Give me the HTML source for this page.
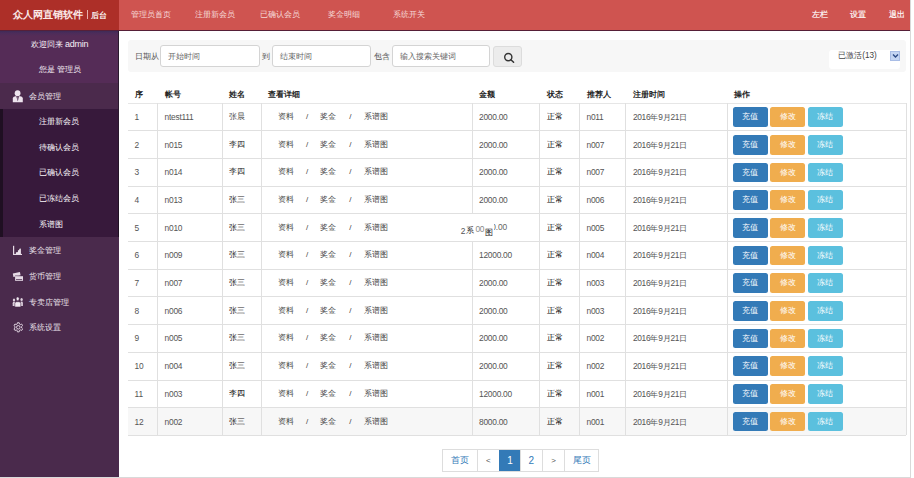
<!DOCTYPE html>
<html><head><meta charset="utf-8">
<style>
*{box-sizing:border-box;margin:0;padding:0}
html,body{width:914px;height:478px;overflow:hidden;background:#fff;font-family:"Liberation Sans",sans-serif;color:#333}
#frame{position:absolute;left:0;top:0;width:911px;height:477.5px;border-right:1px solid #d9d9d9;border-bottom:1.5px solid #d9d9d9;overflow:hidden}
#hdr{position:absolute;left:0;top:0;width:910px;height:31px;background:#cf5450;border-bottom:1px solid #561f38}
#logo{position:absolute;left:0;top:0;width:118.6px;height:30px;background:#ad2f28;color:#fbeae8}
#logo b{position:absolute;left:12.5px;top:8.7px;font-size:10.2px;font-weight:bold;letter-spacing:0;white-space:nowrap;line-height:12px}
#logo i{position:absolute;left:86.8px;top:10px;width:1px;height:9px;background:#e8b0aa}
#logo span{position:absolute;left:91px;top:10.5px;font-size:7.8px;line-height:10px;white-space:nowrap;color:#fff;-webkit-text-stroke:0.2px #fff}
.nav{position:absolute;top:10px;font-size:7.7px;line-height:10px;color:#f6dad8;white-space:nowrap;text-align:center;width:64.5px}
.rnav{position:absolute;top:10px;font-size:7.7px;line-height:10px;color:#fff;-webkit-text-stroke:0.15px #fff;white-space:nowrap}
#side{position:absolute;left:0;top:31px;width:119px;height:447px;background:#4a2a4c}
#welcome{position:absolute;left:0;top:0;width:119px;height:51.6px;background:linear-gradient(#3f2b57 0,#4c2c5a 2px,#552c57 5px)}
#welcome div{position:absolute;left:0;width:119px;text-align:center;color:#f6f0f6;font-size:8px;line-height:10px;white-space:nowrap}
#mm{position:absolute;left:0;top:51.6px;width:119px;height:25.9px;background:#4b2a4c}
#sub{position:absolute;left:0;top:77.5px;width:119px;height:128.2px;background:#37193b;border-left:3px solid #1f0f22}
.si{position:absolute;left:38.8px;font-size:7.6px;line-height:10px;color:#fbf8fb;white-space:nowrap}
.mi{position:absolute;left:28.9px;font-size:7.6px;line-height:10px;color:#f0e8f0;white-space:nowrap}
.ico{position:absolute;left:12px}
#sedge{position:absolute;left:118px;top:31px;width:1px;height:206px;background:linear-gradient(#2a1a2e 0,#2a1a2e 52px,#2c1a30 78px,#1f1022 206px)}
#search{position:absolute;left:128.2px;top:40px;width:778px;height:31.5px;background:#f7f7f7;border-radius:3px}
.inp{position:absolute;top:45.3px;height:21.3px;background:#fff;border:1px solid #d4d4d4;border-radius:3px}
.inp span{position:absolute;left:6.7px;top:5.9px;font-size:7.8px;line-height:10px;color:#666;white-space:nowrap}
.lbl{position:absolute;top:52.3px;font-size:7.5px;line-height:10px;color:#555;white-space:nowrap}
#sbtn{position:absolute;left:493.2px;top:46px;width:29px;height:20.8px;background:#ececec;border:1px solid #dcdcdc;border-radius:3px}
#sel{position:absolute;left:829.4px;top:49.9px;width:70.8px;height:19px;background:#fff;border-radius:3px}
#sel span{position:absolute;left:8.8px;top:1.5px;font-size:8.2px;line-height:10px;color:#444;white-space:nowrap}
#arr{position:absolute;left:890px;top:50.7px;width:9.7px;height:10px;background:#c4d5f3;border:1px solid #a9bde6}
.th{position:absolute;font-size:7.8px;line-height:10px;font-weight:bold;color:#222;white-space:nowrap}
.td{position:absolute;font-size:8.4px;letter-spacing:-0.25px;line-height:10px;color:#555;white-space:nowrap}
.cj,.td.nm,.td.zc{font-size:7.9px;letter-spacing:0}
.td.nm{color:#2a2a2a}
.td.zc{color:#000}
.td.dt{letter-spacing:-0.35px}
.td.dt .cj{font-size:7.6px;letter-spacing:0}
.lk{position:absolute;font-size:7.8px;line-height:10px;color:#444;white-space:nowrap}
.sl{position:absolute;font-size:8px;line-height:10px;color:#444;white-space:nowrap}
.hl{position:absolute;left:128.3px;width:778.2px;height:1px;background:#e0e0e0}
.vl{position:absolute;width:1px;background:#e0e0e0}
.btn{position:absolute;width:34.9px;height:19.6px;border-radius:2.5px;color:#fff;font-size:7.9px;line-height:20.2px;text-align:center;white-space:nowrap}
.b1{background:#337ab7}
.b2{background:#f0ad4e}
.b3{background:#5bc0de}
#pg{position:absolute;left:442.4px;top:449px;width:156.2px;height:23px;border:1px solid #ddd;background:#fff}
.pi{position:absolute;top:0;height:21px;border-left:1px solid #ddd;color:#337ab7;font-size:8px;line-height:21px;text-align:center;white-space:nowrap}
</style></head><body>
<div id="frame">
<div id="hdr">
  <div id="logo"><b>众人网直销软件</b><i></i><span>后台</span></div>
  <div class="nav" style="left:118.6px">管理员首页</div>
  <div class="nav" style="left:183.1px">注册新会员</div>
  <div class="nav" style="left:247.6px">已确认会员</div>
  <div class="nav" style="left:312.1px">奖金明细</div>
  <div class="nav" style="left:376.6px">系统开关</div>
  <div class="rnav" style="left:811.7px">左栏</div>
  <div class="rnav" style="left:850.4px">设置</div>
  <div class="rnav" style="left:888.8px">退出</div>
</div>
<div id="side">
  <div id="welcome">
    <div style="top:7.8px">欢迎回来 <span style="font-size:9px;letter-spacing:-0.3px">admin</span></div>
    <div style="top:33.9px;font-size:7.6px;padding-left:0.8px">您是 管理员</div>
  </div>
  <div id="mm">
    <svg class="ico" style="top:7px" width="12" height="13" viewBox="0 0 12 13"><circle cx="5.6" cy="3.2" r="2.9" fill="#eee4ee"/><path d="M0.8 12.3 V8.6 Q0.8 6.4 3.2 6.2 L8 6.2 Q10.8 6.4 10.8 8.6 V12.3 Z" fill="#eee4ee"/><path d="M4.2 6.2 L7.1 6.2 L5.8 11.2 Z" fill="#4b2a4c"/><path d="M5.4 7.2 L6.2 7.2 L6.3 9 L5.8 9.9 Z" fill="#bfb0bf"/></svg>
    <div class="mi" style="top:9px">会员管理</div>
  </div>
  <div id="sub">
    <div class="si" style="top:8.8px;left:35.8px">注册新会员</div>
    <div class="si" style="top:34.6px;left:35.8px">待确认会员</div>
    <div class="si" style="top:59.7px;left:35.8px">已确认会员</div>
    <div class="si" style="top:85.8px;left:35.8px">已冻结会员</div>
    <div class="si" style="top:111.6px;left:35.8px">系谱图</div>
  </div>
  <svg class="ico" style="top:214px" width="11" height="11" viewBox="0 0 11 11"><rect x="1" y="0.8" width="1.2" height="9.2" fill="#e6dae6"/><rect x="1" y="8.9" width="9" height="1.1" fill="#e6dae6"/><path d="M3.9 9 V7.6 Q4.9 6.4 5.9 7.2 V5.6 Q6.6 4.9 7.2 5.2 V4 Q8.1 3.1 8.9 3.8 V9 Z" fill="#ece2ec"/></svg>
  <div class="mi" style="top:215.1px">奖金管理</div>
  <svg class="ico" style="top:240px" width="12" height="11" viewBox="0 0 12 11"><path d="M0.8 2.4 L7.9 1 L8.6 4.6 L1.4 6 Z" fill="#e6dae6"/><rect x="3.1" y="4.6" width="7.9" height="0.7" fill="#4a2a4c"/><rect x="3.1" y="5.2" width="7.9" height="4.6" fill="#e6dae6"/><rect x="4" y="8.1" width="6.1" height="0.8" fill="#5a3a5c"/></svg>
  <div class="mi" style="top:241px">货币管理</div>
  <svg class="ico" style="top:265px" width="12" height="12" viewBox="0 0 12 12"><ellipse cx="2" cy="3.9" rx="1.2" ry="1.5" fill="#ddd0dd"/><path d="M0.7 10 V7.2 Q0.7 5.8 2 5.8 Q3.3 5.8 3.3 7.2 V10Z" fill="#ddd0dd"/><ellipse cx="9.6" cy="3.6" rx="1.2" ry="1.5" fill="#ddd0dd"/><path d="M8.3 10 V7 Q8.3 5.6 9.6 5.6 Q10.9 5.6 10.9 7 V10Z" fill="#ddd0dd"/><ellipse cx="5.7" cy="2.8" rx="1.5" ry="1.9" fill="#f2eaf2" stroke="#4a2a4c" stroke-width="0.5"/><path d="M2.8 11 V7.6 Q2.8 5.7 4.6 5.7 H6.9 Q8.8 5.7 8.8 7.6 V11Z" fill="#f2eaf2" stroke="#4a2a4c" stroke-width="0.6"/></svg>
  <div class="mi" style="top:267px">专卖店管理</div>
  <svg class="ico" style="top:291.4px;left:12.5px" width="10.6" height="10.6" viewBox="0 0 12 12"><g fill="none" stroke="#e6dae6" stroke-width="1.05"><path d="M5 0.8 H7 L7.3 2.3 L8.4 2.9 L9.8 2.3 L10.9 4 L9.8 5 V6.8 L10.9 7.8 L9.8 9.6 L8.4 9 L7.3 9.6 L7 11.2 H5 L4.7 9.6 L3.6 9 L2.2 9.6 L1.1 7.8 L2.2 6.8 V5 L1.1 4 L2.2 2.3 L3.6 2.9 L4.7 2.3 Z"/><circle cx="6" cy="6" r="2"/></g></svg>
  <div class="mi" style="top:292.4px">系统设置</div>
</div>
<div id="sedge"></div>
<div id="search"></div>
<div class="lbl" style="left:135.3px">日期从</div>
<div class="inp" style="left:160px;width:99.5px"><span>开始时间</span></div>
<div class="lbl" style="left:261.8px">到</div>
<div class="inp" style="left:272px;width:99.2px"><span>结束时间</span></div>
<div class="lbl" style="left:374.4px">包含</div>
<div class="inp" style="left:391.9px;width:98px"><span>输入搜索关键词</span></div>
<div id="sbtn"><svg style="position:absolute;left:7.5px;top:3.5px" width="13" height="13" viewBox="0 0 13 13"><circle cx="6.3" cy="6.1" r="3.6" fill="none" stroke="#333" stroke-width="1.4"/><path d="M8.9 8.7 L11.6 11.3" stroke="#333" stroke-width="1.5" stroke-linecap="round"/></svg></div>
<div id="sel"><span>已激活(13)</span></div>
<div id="arr"><svg style="position:absolute;left:0.6px;top:1.5px" width="7" height="6" viewBox="0 0 7 6"><path d="M1 1.5 L3.5 4 L6 1.5" fill="none" stroke="#2b4a86" stroke-width="1.4"/></svg></div>
<div class="th" style="left:134.6px;top:89.8px">序</div>
<div class="th" style="left:164.6px;top:89.8px">帐号</div>
<div class="th" style="left:229.1px;top:89.8px">姓名</div>
<div class="th" style="left:268.4px;top:89.8px">查看详细</div>
<div class="th" style="left:479px;top:89.8px">金额</div>
<div class="th" style="left:546.7px;top:89.8px">状态</div>
<div class="th" style="left:586.5px;top:89.8px">推荐人</div>
<div class="th" style="left:633px;top:89.8px">注册时间</div>
<div class="th" style="left:733.6px;top:89.8px">操作</div>
<div class="hl" style="left:128.3px;top:102.5px;width:778.2px;height:1.6px;background:#e6e6e6"></div>
<div style="position:absolute;left:128.3px;top:407.67px;width:778.2px;height:27.67px;background:#f7f7f7"></div>
<div class="hl" style="top:130.47px"></div>
<div class="td" style="left:134.6px;top:112.13499999999999px">1</div>
<div class="td" style="left:164.6px;top:112.13499999999999px">ntest111</div>
<div class="td nm" style="left:229.1px;top:112.13499999999999px;color:#555">张晨</div>
<div class="lk" style="left:278px;top:112.13499999999999px">资料</div>
<div class="sl" style="left:306px;top:112.13499999999999px">/</div>
<div class="lk" style="left:320.2px;top:112.13499999999999px">奖金</div>
<div class="sl" style="left:349.2px;top:112.13499999999999px">/</div>
<div class="lk" style="left:364.2px;top:112.13499999999999px">系谱图</div>
<div class="td am" style="left:479px;top:112.13499999999999px">2000.00</div>
<div class="td zc" style="left:546.7px;top:112.13499999999999px">正常</div>
<div class="td" style="left:586.5px;top:112.13499999999999px">n011</div>
<div class="td dt" style="left:633px;top:112.13499999999999px">2016<span class="cj">年</span>9<span class="cj">月</span>21<span class="cj">日</span></div>
<div class="btn b1" style="left:732.8px;top:107.3px">充值</div>
<div class="btn b2" style="left:770.3px;top:107.3px">修改</div>
<div class="btn b3" style="left:807.7px;top:107.3px">冻结</div>
<div class="hl" style="top:158.14px"></div>
<div class="td" style="left:134.6px;top:139.805px">2</div>
<div class="td" style="left:164.6px;top:139.805px">n015</div>
<div class="td nm" style="left:229.1px;top:139.805px">李四</div>
<div class="lk" style="left:278px;top:139.805px">资料</div>
<div class="sl" style="left:306px;top:139.805px">/</div>
<div class="lk" style="left:320.2px;top:139.805px">奖金</div>
<div class="sl" style="left:349.2px;top:139.805px">/</div>
<div class="lk" style="left:364.2px;top:139.805px">系谱图</div>
<div class="td am" style="left:479px;top:139.805px">2000.00</div>
<div class="td zc" style="left:546.7px;top:139.805px">正常</div>
<div class="td" style="left:586.5px;top:139.805px">n007</div>
<div class="td dt" style="left:633px;top:139.805px">2016<span class="cj">年</span>9<span class="cj">月</span>21<span class="cj">日</span></div>
<div class="btn b1" style="left:732.8px;top:134.97px">充值</div>
<div class="btn b2" style="left:770.3px;top:134.97px">修改</div>
<div class="btn b3" style="left:807.7px;top:134.97px">冻结</div>
<div class="hl" style="top:185.81px"></div>
<div class="td" style="left:134.6px;top:167.475px">3</div>
<div class="td" style="left:164.6px;top:167.475px">n014</div>
<div class="td nm" style="left:229.1px;top:167.475px">李四</div>
<div class="lk" style="left:278px;top:167.475px">资料</div>
<div class="sl" style="left:306px;top:167.475px">/</div>
<div class="lk" style="left:320.2px;top:167.475px">奖金</div>
<div class="sl" style="left:349.2px;top:167.475px">/</div>
<div class="lk" style="left:364.2px;top:167.475px">系谱图</div>
<div class="td am" style="left:479px;top:167.475px">2000.00</div>
<div class="td zc" style="left:546.7px;top:167.475px">正常</div>
<div class="td" style="left:586.5px;top:167.475px">n007</div>
<div class="td dt" style="left:633px;top:167.475px">2016<span class="cj">年</span>9<span class="cj">月</span>21<span class="cj">日</span></div>
<div class="btn b1" style="left:732.8px;top:162.64px">充值</div>
<div class="btn b2" style="left:770.3px;top:162.64px">修改</div>
<div class="btn b3" style="left:807.7px;top:162.64px">冻结</div>
<div class="hl" style="top:213.48000000000002px"></div>
<div class="td" style="left:134.6px;top:195.145px">4</div>
<div class="td" style="left:164.6px;top:195.145px">n013</div>
<div class="td nm" style="left:229.1px;top:195.145px">张三</div>
<div class="lk" style="left:278px;top:195.145px">资料</div>
<div class="sl" style="left:306px;top:195.145px">/</div>
<div class="lk" style="left:320.2px;top:195.145px">奖金</div>
<div class="sl" style="left:349.2px;top:195.145px">/</div>
<div class="lk" style="left:364.2px;top:195.145px">系谱图</div>
<div class="td am" style="left:479px;top:195.145px">2000.00</div>
<div class="td zc" style="left:546.7px;top:195.145px">正常</div>
<div class="td" style="left:586.5px;top:195.145px">n006</div>
<div class="td dt" style="left:633px;top:195.145px">2016<span class="cj">年</span>9<span class="cj">月</span>21<span class="cj">日</span></div>
<div class="btn b1" style="left:732.8px;top:190.31px">充值</div>
<div class="btn b2" style="left:770.3px;top:190.31px">修改</div>
<div class="btn b3" style="left:807.7px;top:190.31px">冻结</div>
<div class="hl" style="top:241.15000000000003px"></div>
<div class="td" style="left:134.6px;top:222.81500000000003px">5</div>
<div class="td" style="left:164.6px;top:222.81500000000003px">n010</div>
<div class="td nm" style="left:229.1px;top:222.81500000000003px">张三</div>
<div class="lk" style="left:278px;top:222.81500000000003px">资料</div>
<div class="sl" style="left:306px;top:222.81500000000003px">/</div>
<div class="lk" style="left:320.2px;top:222.81500000000003px">奖金</div>
<div class="sl" style="left:349.2px;top:222.81500000000003px">/</div>
<div class="lk" style="left:364.2px;top:222.81500000000003px">系谱图</div>
<div class="td" style="left:460.8px;top:226px;color:#555">2</div>
<div class="td zc" style="left:465.6px;top:225.9px;color:#222">系</div>
<div style="position:absolute;left:475.4px;top:223.8px;width:10px;height:9px;overflow:hidden"><div class="td" style="left:0;top:0;color:#888">00</div></div>
<div class="td zc" style="left:484.6px;top:228.2px;color:#111">图</div>
<div style="position:absolute;left:493.6px;top:222px;width:16px;height:8.6px;overflow:hidden"><div class="td" style="left:-2.4px;top:0.4px;color:#666;letter-spacing:-0.1px">0.00</div></div>
<div class="td zc" style="left:546.7px;top:222.81500000000003px">正常</div>
<div class="td" style="left:586.5px;top:222.81500000000003px">n005</div>
<div class="td dt" style="left:633px;top:222.81500000000003px">2016<span class="cj">年</span>9<span class="cj">月</span>21<span class="cj">日</span></div>
<div class="btn b1" style="left:732.8px;top:217.98000000000002px">充值</div>
<div class="btn b2" style="left:770.3px;top:217.98000000000002px">修改</div>
<div class="btn b3" style="left:807.7px;top:217.98000000000002px">冻结</div>
<div class="hl" style="top:268.82000000000005px"></div>
<div class="td" style="left:134.6px;top:250.48500000000004px">6</div>
<div class="td" style="left:164.6px;top:250.48500000000004px">n009</div>
<div class="td nm" style="left:229.1px;top:250.48500000000004px">张三</div>
<div class="lk" style="left:278px;top:250.48500000000004px">资料</div>
<div class="sl" style="left:306px;top:250.48500000000004px">/</div>
<div class="lk" style="left:320.2px;top:250.48500000000004px">奖金</div>
<div class="sl" style="left:349.2px;top:250.48500000000004px">/</div>
<div class="lk" style="left:364.2px;top:250.48500000000004px">系谱图</div>
<div class="td am" style="left:479px;top:250.48500000000004px">12000.00</div>
<div class="td zc" style="left:546.7px;top:250.48500000000004px">正常</div>
<div class="td" style="left:586.5px;top:250.48500000000004px">n004</div>
<div class="td dt" style="left:633px;top:250.48500000000004px">2016<span class="cj">年</span>9<span class="cj">月</span>21<span class="cj">日</span></div>
<div class="btn b1" style="left:732.8px;top:245.65000000000003px">充值</div>
<div class="btn b2" style="left:770.3px;top:245.65000000000003px">修改</div>
<div class="btn b3" style="left:807.7px;top:245.65000000000003px">冻结</div>
<div class="hl" style="top:296.49px"></div>
<div class="td" style="left:134.6px;top:278.155px">7</div>
<div class="td" style="left:164.6px;top:278.155px">n007</div>
<div class="td nm" style="left:229.1px;top:278.155px">张三</div>
<div class="lk" style="left:278px;top:278.155px">资料</div>
<div class="sl" style="left:306px;top:278.155px">/</div>
<div class="lk" style="left:320.2px;top:278.155px">奖金</div>
<div class="sl" style="left:349.2px;top:278.155px">/</div>
<div class="lk" style="left:364.2px;top:278.155px">系谱图</div>
<div class="td am" style="left:479px;top:278.155px">2000.00</div>
<div class="td zc" style="left:546.7px;top:278.155px">正常</div>
<div class="td" style="left:586.5px;top:278.155px">n003</div>
<div class="td dt" style="left:633px;top:278.155px">2016<span class="cj">年</span>9<span class="cj">月</span>21<span class="cj">日</span></div>
<div class="btn b1" style="left:732.8px;top:273.32px">充值</div>
<div class="btn b2" style="left:770.3px;top:273.32px">修改</div>
<div class="btn b3" style="left:807.7px;top:273.32px">冻结</div>
<div class="hl" style="top:324.16px"></div>
<div class="td" style="left:134.6px;top:305.825px">8</div>
<div class="td" style="left:164.6px;top:305.825px">n006</div>
<div class="td nm" style="left:229.1px;top:305.825px">张三</div>
<div class="lk" style="left:278px;top:305.825px">资料</div>
<div class="sl" style="left:306px;top:305.825px">/</div>
<div class="lk" style="left:320.2px;top:305.825px">奖金</div>
<div class="sl" style="left:349.2px;top:305.825px">/</div>
<div class="lk" style="left:364.2px;top:305.825px">系谱图</div>
<div class="td am" style="left:479px;top:305.825px">2000.00</div>
<div class="td zc" style="left:546.7px;top:305.825px">正常</div>
<div class="td" style="left:586.5px;top:305.825px">n003</div>
<div class="td dt" style="left:633px;top:305.825px">2016<span class="cj">年</span>9<span class="cj">月</span>21<span class="cj">日</span></div>
<div class="btn b1" style="left:732.8px;top:300.99px">充值</div>
<div class="btn b2" style="left:770.3px;top:300.99px">修改</div>
<div class="btn b3" style="left:807.7px;top:300.99px">冻结</div>
<div class="hl" style="top:351.83000000000004px"></div>
<div class="td" style="left:134.6px;top:333.495px">9</div>
<div class="td" style="left:164.6px;top:333.495px">n005</div>
<div class="td nm" style="left:229.1px;top:333.495px">张三</div>
<div class="lk" style="left:278px;top:333.495px">资料</div>
<div class="sl" style="left:306px;top:333.495px">/</div>
<div class="lk" style="left:320.2px;top:333.495px">奖金</div>
<div class="sl" style="left:349.2px;top:333.495px">/</div>
<div class="lk" style="left:364.2px;top:333.495px">系谱图</div>
<div class="td am" style="left:479px;top:333.495px">2000.00</div>
<div class="td zc" style="left:546.7px;top:333.495px">正常</div>
<div class="td" style="left:586.5px;top:333.495px">n002</div>
<div class="td dt" style="left:633px;top:333.495px">2016<span class="cj">年</span>9<span class="cj">月</span>21<span class="cj">日</span></div>
<div class="btn b1" style="left:732.8px;top:328.66px">充值</div>
<div class="btn b2" style="left:770.3px;top:328.66px">修改</div>
<div class="btn b3" style="left:807.7px;top:328.66px">冻结</div>
<div class="hl" style="top:379.50000000000006px"></div>
<div class="td" style="left:134.6px;top:361.165px">10</div>
<div class="td" style="left:164.6px;top:361.165px">n004</div>
<div class="td nm" style="left:229.1px;top:361.165px">张三</div>
<div class="lk" style="left:278px;top:361.165px">资料</div>
<div class="sl" style="left:306px;top:361.165px">/</div>
<div class="lk" style="left:320.2px;top:361.165px">奖金</div>
<div class="sl" style="left:349.2px;top:361.165px">/</div>
<div class="lk" style="left:364.2px;top:361.165px">系谱图</div>
<div class="td am" style="left:479px;top:361.165px">2000.00</div>
<div class="td zc" style="left:546.7px;top:361.165px">正常</div>
<div class="td" style="left:586.5px;top:361.165px">n002</div>
<div class="td dt" style="left:633px;top:361.165px">2016<span class="cj">年</span>9<span class="cj">月</span>21<span class="cj">日</span></div>
<div class="btn b1" style="left:732.8px;top:356.33000000000004px">充值</div>
<div class="btn b2" style="left:770.3px;top:356.33000000000004px">修改</div>
<div class="btn b3" style="left:807.7px;top:356.33000000000004px">冻结</div>
<div class="hl" style="top:407.1700000000001px"></div>
<div class="td" style="left:134.6px;top:388.83500000000004px">11</div>
<div class="td" style="left:164.6px;top:388.83500000000004px">n003</div>
<div class="td nm" style="left:229.1px;top:388.83500000000004px;color:#000">李四</div>
<div class="lk" style="left:278px;top:388.83500000000004px">资料</div>
<div class="sl" style="left:306px;top:388.83500000000004px">/</div>
<div class="lk" style="left:320.2px;top:388.83500000000004px">奖金</div>
<div class="sl" style="left:349.2px;top:388.83500000000004px">/</div>
<div class="lk" style="left:364.2px;top:388.83500000000004px">系谱图</div>
<div class="td am" style="left:479px;top:388.83500000000004px">12000.00</div>
<div class="td zc" style="left:546.7px;top:388.83500000000004px">正常</div>
<div class="td" style="left:586.5px;top:388.83500000000004px">n001</div>
<div class="td dt" style="left:633px;top:388.83500000000004px">2016<span class="cj">年</span>9<span class="cj">月</span>21<span class="cj">日</span></div>
<div class="btn b1" style="left:732.8px;top:384.00000000000006px">充值</div>
<div class="btn b2" style="left:770.3px;top:384.00000000000006px">修改</div>
<div class="btn b3" style="left:807.7px;top:384.00000000000006px">冻结</div>
<div class="hl" style="top:434.84000000000003px"></div>
<div class="td" style="left:134.6px;top:416.505px">12</div>
<div class="td" style="left:164.6px;top:416.505px">n002</div>
<div class="td nm" style="left:229.1px;top:416.505px">张三</div>
<div class="lk" style="left:278px;top:416.505px">资料</div>
<div class="sl" style="left:306px;top:416.505px">/</div>
<div class="lk" style="left:320.2px;top:416.505px">奖金</div>
<div class="sl" style="left:349.2px;top:416.505px">/</div>
<div class="lk" style="left:364.2px;top:416.505px">系谱图</div>
<div class="td am" style="left:479px;top:416.505px">8000.00</div>
<div class="td zc" style="left:546.7px;top:416.505px">正常</div>
<div class="td" style="left:586.5px;top:416.505px">n001</div>
<div class="td dt" style="left:633px;top:416.505px">2016<span class="cj">年</span>9<span class="cj">月</span>21<span class="cj">日</span></div>
<div class="btn b1" style="left:732.8px;top:411.67px">充值</div>
<div class="btn b2" style="left:770.3px;top:411.67px">修改</div>
<div class="btn b3" style="left:807.7px;top:411.67px">冻结</div>
<div class="vl" style="left:156.9px;top:103.3px;height:332.04px"></div>
<div class="vl" style="left:222.0px;top:103.3px;height:332.04px"></div>
<div class="vl" style="left:261.0px;top:103.3px;height:332.04px"></div>
<div class="vl" style="left:472.0px;top:103.3px;height:110.68px"></div>
<div class="vl" style="left:472.0px;top:241.65000000000003px;height:193.69px"></div>
<div class="vl" style="left:539.2px;top:103.3px;height:332.04px"></div>
<div class="vl" style="left:579.0px;top:103.3px;height:332.04px"></div>
<div class="vl" style="left:624.9px;top:103.3px;height:332.04px"></div>
<div class="vl" style="left:726.5px;top:103.3px;height:332.04px"></div>
<div class="vl" style="left:906.0px;top:103.3px;height:332.04px"></div>
<div id="pg">
  <div class="pi" style="left:0;width:33.2px;border-left:0;font-size:8.8px">首页</div>
  <div class="pi" style="left:33.2px;width:22.3px;color:#555">&lt;</div>
  <div class="pi" style="left:55.5px;width:21.2px;background:#337ab7;color:#fff;border-left-color:#337ab7;font-size:10px">1</div>
  <div class="pi" style="left:76.7px;width:21.6px;font-size:10px">2</div>
  <div class="pi" style="left:98.3px;width:22.6px;color:#555">&gt;</div>
  <div class="pi" style="left:120.9px;width:34.3px;font-size:8.8px">尾页</div>
</div>
</div>
</body></html>
